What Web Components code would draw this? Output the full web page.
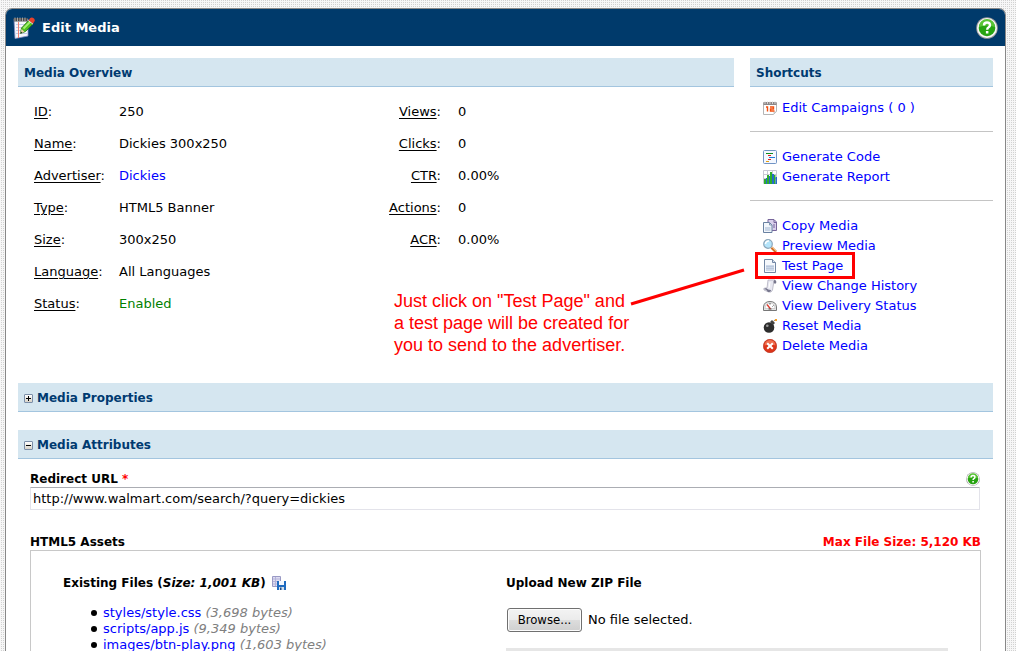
<!DOCTYPE html>
<html lang="en">
<head>
<meta charset="utf-8">
<title>Edit Media</title>
<style>
  html { background: #f7f7f7 conic-gradient(from 270deg at 1px 1px, #d2d2d2 25%, transparent 0) 1px 0 / 2px 2px; }
  body { margin: 8px 10px 0 5px; font: 13px/16px "DejaVu Sans", Verdana, sans-serif; color: #000; }
</style>
</head>
<body>
<media-panel heading="Edit Media">
  <media-columns>
    <panel-section heading="Media Overview">
      <media-overview></media-overview>
    </panel-section>
    <panel-section heading="Shortcuts">
      <shortcut-group>
        <shortcut-link icon="calendar">Edit Campaigns ( 0 )</shortcut-link>
      </shortcut-group>
      <shortcut-group>
        <shortcut-link icon="code">Generate Code</shortcut-link>
        <shortcut-link icon="chart">Generate Report</shortcut-link>
      </shortcut-group>
      <shortcut-group>
        <shortcut-link icon="copy">Copy Media</shortcut-link>
        <shortcut-link icon="search">Preview Media</shortcut-link>
        <shortcut-link icon="page">Test Page<call-out slot="note">Just click on "Test Page" and<br>a test page will be created for<br>you to send to the advertiser.</call-out></shortcut-link>
        <shortcut-link icon="scroll">View Change History</shortcut-link>
        <shortcut-link icon="gauge">View Delivery Status</shortcut-link>
        <shortcut-link icon="bomb">Reset Media</shortcut-link>
        <shortcut-link icon="delete">Delete Media</shortcut-link>
      </shortcut-group>
    </panel-section>
  </media-columns>
  <panel-section heading="Media Properties" toggle="closed"></panel-section>
  <panel-section heading="Media Attributes" toggle="open">
    <media-attributes></media-attributes>
  </panel-section>
</media-panel>

<script>
const ICONS = {
  notepad: `<svg viewBox="0 0 22 22"><path d="M1 2 15 2 15 19 2 21.500z" fill="#f6f7fc" stroke="#8790c4" stroke-width=".8"/><path d="M3 7.500h11M3 10.500h11M3 13.500h11M3 16.500h11" stroke="#c3cdea"/><path d="M5.500 5v16" stroke="#f08070"/><path d="M.5 1h14v3.500H1z" fill="#4a4a4a"/><path d="M2 .5v4M4.500.5v4M7 .5v4M9.500.5v4M12 .5v4" stroke="#ccc" stroke-width=".7"/><path d="M7.500 16.500 8.500 11 15.500 3.500 20 7 12.500 14.500z" fill="#4fc020" stroke="#28720f" stroke-width=".8"/><path d="m10.500 11.500 7-7" stroke="#a6f06f" stroke-width="1.800"/><path d="m7.500 16.500 1-4.500 3 2.800z" fill="#efd3a4"/><path d="m7.500 16.500.5-2 1.400 1.300z" fill="#222"/><path d="M15.500 3.500 17 1.200Q19-.3 21 1.500q1.600 2 0 3.500L20 7z" fill="#e8412a"/><path d="m15.300 3.500 4.700 3.700" stroke="#e4e4e4"/></svg>`,
  help: `<svg viewBox="0 0 22 22"><circle cx="11" cy="11" r="10.800" fill="#999"/><circle cx="11" cy="11" r="10" fill="#f6f6f6"/><circle cx="11" cy="11" r="8.300" fill="#27a312"/><path d="M3 10a8 8 0 0 1 16 0q-8-3-16 0" fill="#59c436"/><path d="M8 8.500q0-3 3-3t3 2.600q0 1.500-1.600 2.400-1.200.7-1.200 2.200" fill="none" stroke="#fff" stroke-width="2.400"/><path d="M9.900 14h2.500v2.500H9.900z" fill="#fff"/></svg>`,
  calendar: `<svg viewBox="0 0 14 14"><path d="M.5 2h13v8.500l-3 3H.5z" fill="#fff" stroke="#b5b5b5"/><path d="M10.500 13.500v-3h3z" fill="#ccc"/><path d="M.5 1h13v3H.5z" fill="#8d8787"/><path d="M2 0v3M4.500 0v3M7 0v3M9.500 0v3M12 0v3" stroke="#e5e5e5" stroke-width=".8"/><path d="M3 6h1.500v4.500M7 6h3.500v2H7.500v2H11.500" stroke="#f4500f" stroke-width="1.400" fill="none"/></svg>`,
  code: `<svg viewBox="0 0 14 14"><rect x=".5" y=".5" width="13" height="13" rx="1" fill="#f4f8ff" stroke="#7194c5"/><path d="M3 3.500h7" stroke="#108a20" stroke-width="1.200"/><path d="M5 5.500h3" stroke="#d22"/><path d="M6 7.500h6" stroke="#227cda" stroke-width="1.200"/><path d="M5 9.500h3" stroke="#d22"/><path d="M3 11.500h3" stroke="#e8a010" stroke-width="1.200"/></svg>`,
  chart: `<svg viewBox="0 0 14 14"><path d="M.5.500h13v13H.5zM.5 4.500h13M.5 8.500h13M4.500.5v13M9.500.5v13" fill="#fff" stroke="#c9c9d4"/><path d="M1 9h2v5H1zM4 5h2v9H4zM7 2h2v12H7zM11 5h1.500v9H11z" fill="#2fae2a"/><path d="M3 8h1v6H3zM6 6h1v8H6zM9 4h2v10H9zM12.500 7H14v7h-1.500z" fill="#276aca"/></svg>`,
  copy: `<svg viewBox="0 0 14 14"><path d="M5 .5h6l2.500 2.500v8.500H5z" fill="#d9d0ec" stroke="#77659b"/><path d="M11 1v2.500h2M10 6h2M10 8h2" fill="none" stroke="#77659b"/><path d="M.5 3.500h6L9 6v7.500H.5z" fill="#f2f6fb" stroke="#6981a1"/><path d="M2 8h5.500v4H2z" fill="#c8d5e6"/><path d="M6.500 3.500V6H9" fill="none" stroke="#8398b3"/></svg>`,
  search: `<svg viewBox="0 0 14 14"><path d="m8.500 8.500 4.500 4.500" stroke="#cf7330" stroke-width="2.700"/><path d="m9 8 4 4" stroke="#f7bd79"/><circle cx="5" cy="5" r="4.300" fill="#b4e4fa" stroke="#8ba6ba" stroke-width="1.200"/><path d="M2.500 5A3 3 0 0 1 6 2" stroke="#fff" stroke-width="1.500" fill="none"/></svg>`,
  page: `<svg viewBox="0 0 14 14"><path d="M1.500.500h8L12.500 3.500v10h-11z" fill="#f5f8fc" stroke="#7287a5"/><path d="M9.500.5v3h3" fill="#d5e0ed" stroke="#7287a5"/><path d="M3 6h8v6H3z" fill="#ccd8e9"/><path d="M3 7.500h8M3 9.500h8" stroke="#b9c7dc"/></svg>`,
  scroll: `<svg viewBox="0 0 14 14"><path d="M5 1h7q-2 1-1.500 4L9.500 11q-1 3-4 2L1 11q-1-2 1-2h2z" fill="#e8e8f1" stroke="#a9a8b8" stroke-width=".7"/><path d="M11 4.500q-1-3.500 1-3.500 2 1 1 3.500zM1 10q2 0 4 3 3 0 3-2-3 0-5-2z" fill="#77778d"/><path d="M7 3 6 9" stroke="#fff"/></svg>`,
  gauge: `<svg viewBox="0 0 14 14"><path d="M.5 11.500V8Q1 2.500 7 2.500T13.500 8v3.500z" fill="#e6e6e6" stroke="#777"/><path d="M2 9.500Q2.500 4 7 4T12 9.500z" fill="#fff" stroke="#bbb" stroke-width=".6"/><path d="M4 5.500 7.500 10" stroke="#db3b2d" stroke-width="1.300"/><path d="M5.500 10h3M10.500 6.500l-1 1M7 4v1.500" stroke="#555"/></svg>`,
  bomb: `<svg viewBox="0 0 14 14"><circle cx="6" cy="8.500" r="5.300" fill="#2d2d2d"/><path d="m7 3 2-2 3 3-2 2z" fill="#414141"/><path d="M10.500 2.500q1-2 2.500-1" fill="none" stroke="#8b6c42"/><path d="M12 0h2v2h-2z" fill="#f5a12a"/><circle cx="4.300" cy="6.800" r="1.300" fill="#999"/></svg>`,
  delete: `<svg viewBox="0 0 14 14"><circle cx="7" cy="7" r="6.700" fill="#dc3519" stroke="#b42816" stroke-width=".6"/><path d="M1.500 6.500a5.500 5.500 0 0 1 11 0q-5-2-11 0" fill="#ef7050"/><path d="m4.200 4.200 5.600 5.600m0-5.600L4.200 9.800" stroke="#fff" stroke-width="2"/></svg>`,
  save: `<svg viewBox="0 0 14 14"><path d="M.5.500h8v10h-8z" fill="#dddcf1" stroke="#9a9ac5"/><path d="M1 3h7M1 5.500h7M1 8h7M3.500 1v9" stroke="#b4b3da"/><path d="M5 5h9v9H5z" fill="#1f6bc0"/><path d="M7 5h5v4H7z" fill="#f5f9ff"/><path d="M7 11h5v3H7z" fill="#d2dfec"/><path d="M8 11.500h1.500V14H8z" fill="#204b80"/></svg>`
};

function define(name, html, setup) {
  const template = document.createElement("template");
  template.innerHTML = html;
  customElements.define(name, class extends HTMLElement {
    constructor() {
      super();
      this.attachShadow({ mode: "open" }).append(template.content.cloneNode(true));
    }
    connectedCallback() { if (setup) setup(this, this.shadowRoot); }
  });
}

define("ui-icon", `
  <style>
    :host { display: block; width: 14px; height: 14px; flex: none; }
    svg { display: block; width: 100%; height: 100%; }
    div { height: 100%; }
  </style><div aria-hidden="true"></div>`,
  (host, root) => { root.querySelector("div").innerHTML = ICONS[host.getAttribute("name")]; });

define("media-panel", `
  <style>
    :host { display: block; background: #fff; border: 1px solid #888; border-bottom: 0; border-radius: 7px 7px 0 0; overflow: hidden; }
    header { display: flex; align-items: center; gap: 7px; height: 37px; padding: 0 7px 0 7px; background: #003a6b; color: #fff; }
    h1 { flex: 1; margin: 0; font-size: 13px; line-height: 18px; }
    ui-icon { width: 22px; height: 22px; }
    button { display: block; padding: 0; border: 0; background: none; }
    main { display: grid; grid-template-columns: minmax(0, 1fr); row-gap: 18px; padding: 12px 12px 0; }
  </style>
  <header><ui-icon name="notepad"></ui-icon><h1></h1><button aria-label="Help"><ui-icon name="help"></ui-icon></button></header>
  <main><slot></slot></main>`,
  (host, root) => { root.querySelector("h1").textContent = host.getAttribute("heading"); });

define("media-columns", `
  <style>
    :host { display: grid; grid-template-columns: minmax(0, 1fr) 243px; gap: 16px; }
  </style><slot></slot>`);

define("panel-section", `
  <style>
    :host { display: block; }
    h2 { display: flex; align-items: center; gap: 4px; margin: 0; padding: 7px 6px 5px; background: #d5e6f0; border-bottom: 1px solid #a3c5df; color: #003a70; font-size: 12px; line-height: 16px; }
    button { width: 9px; height: 9px; padding: 0; border: 1px solid #7b8ea8; border-radius: 1px; background: linear-gradient(#fff, #d8d3c8); }
    button svg { display: block; }
  </style>
  <h2></h2><slot></slot>`,
  (host, root) => {
    const h2 = root.querySelector("h2");
    const toggle = host.getAttribute("toggle");
    if (toggle) {
      const open = toggle === "open";
      h2.innerHTML = `<button aria-label="Toggle section" aria-expanded="${open}"><svg width="7" height="7" viewBox="0 0 7 7"><path d="M1 3h5v1H1z${open ? "" : "M3 1h1v5H3z"}"/></svg></button>`;
    }
    h2.append(host.getAttribute("heading"));
  });

define("media-overview", `
  <style>
    :host { display: flex; align-items: flex-start; padding: 9px 16px 0; }
    table { border-collapse: collapse; }
    th, td { height: 32px; padding: 0; font-weight: normal; text-align: left; }
    table:first-of-type { width: 335px; }
    table:first-of-type th { width: 85px; }
    table:last-of-type th { width: 72px; text-align: right; }
    table:last-of-type td { padding-left: 17px; }
    u { text-underline-offset: 2px; }
    a { color: #00f; text-decoration: none; }
    .on { color: #008000; }
  </style>
  <table>
    <tr><th scope="row"><u>ID</u>:</th><td>250</td></tr>
    <tr><th scope="row"><u>Name</u>:</th><td>Dickies 300x250</td></tr>
    <tr><th scope="row"><u>Advertiser</u>:</th><td><a href="#">Dickies</a></td></tr>
    <tr><th scope="row"><u>Type</u>:</th><td>HTML5 Banner</td></tr>
    <tr><th scope="row"><u>Size</u>:</th><td>300x250</td></tr>
    <tr><th scope="row"><u>Language</u>:</th><td>All Languages</td></tr>
    <tr><th scope="row"><u>Status</u>:</th><td class="on">Enabled</td></tr>
  </table>
  <table>
    <tr><th scope="row"><u>Views</u>:</th><td>0</td></tr>
    <tr><th scope="row"><u>Clicks</u>:</th><td>0</td></tr>
    <tr><th scope="row"><u>CTR</u>:</th><td>0.00%</td></tr>
    <tr><th scope="row"><u>Actions</u>:</th><td>0</td></tr>
    <tr><th scope="row"><u>ACR</u>:</th><td>0.00%</td></tr>
  </table>`);

define("shortcut-group", `
  <style>
    :host { display: block; padding: 15px 0 13px; border-bottom: 1px solid #c4c4c4; }
    :host(:first-of-type) { padding-top: 11px; }
    :host(:last-of-type) { border-bottom: 0; padding-bottom: 9px; }
  </style><slot></slot>`);

define("shortcut-link", `
  <style>
    :host { display: block; position: relative; padding-left: 13px; }
    a { display: flex; align-items: center; gap: 5px; height: 20px; color: #00f; text-decoration: none; }
  </style>
  <a href="#"><div></div><span><slot></slot></span></a><slot name="note"></slot>`,
  (host, root) => { root.querySelector("div").innerHTML = `<ui-icon name="${host.getAttribute("icon")}"></ui-icon>`; });

/* Red frame round a shortcut, with a line to a note on its left. */
define("call-out", `
  <style>
    :host { color: #f00; font: 18px/22px "Liberation Sans", Arial, sans-serif; }
    .frame, svg, p { position: absolute; z-index: 1; pointer-events: none; }
    .frame { box-sizing: border-box; left: 5px; top: -4px; width: 100px; height: 27px; border: 3px solid #f00; }
    svg { left: -120px; top: 11px; }
    p { left: -356px; top: 34px; margin: 0; white-space: nowrap; }
  </style>
  <div class="frame"></div>
  <svg width="120" height="40" viewBox="0 0 120 40"><path d="M1 37 114 3" stroke="#f00" stroke-width="3"/></svg>
  <p><slot></slot></p>`);

define("media-attributes", `
  <style>
    :host { display: block; padding: 12px 12px 0; }
    .label { display: flex; justify-content: space-between; align-items: center; height: 16px; font-size: 12px; font-weight: bold; }
    .label b { color: #f00; }
    .help { display: block; padding: 0; border: 0; background: none; }
    .url { display: block; box-sizing: border-box; width: 100%; height: 23px; padding: 0 2px; border: 1px solid #e3e3ea; border-top-color: #abadb3; font: inherit; color: #000; background: #fff; }
    .inset { margin-right: 1px; }
    .second { margin-top: 24px; }
    .assets { display: grid; grid-template-columns: 443px minmax(0, 1fr); padding: 24px 32px 0; border: 1px solid #c8c8c8; border-bottom: 0; }
    h3 { display: flex; align-items: center; gap: 6px; height: 16px; margin: 0; font-size: 12px; line-height: 16px; }
    ul { margin: 14px 0 0; padding: 0 0 0 28px; list-style: none; }
    li { height: 16px; white-space: nowrap; }
    li::before { content: ""; display: inline-block; width: 6px; height: 6px; margin: 0 6px 1px 0; border-radius: 3px; background: #000; }
    a { color: #00f; text-decoration: none; }
    i { color: #808080; }
    h3 i { color: #000; }
    .file { display: flex; align-items: center; gap: 6px; margin-top: 17px; padding: 0 0 16px 1px; }
    .browse { width: 75px; height: 24px; padding: 0; border: 1px solid #707070; border-radius: 3px; background: linear-gradient(#f3f3f3, #ebebeb 50%, #dddddd 50%, #cfcfcf); box-shadow: inset 0 0 0 1px #fcfcfc; font: 13px/16px "DejaVu Sans Condensed", Tahoma, sans-serif; color: #000; }
    .bar { height: 3px; background: #e6e6e6; }
  </style>
  <div class="inset">
    <div class="label"><label for="url">Redirect URL <b>*</b></label><button class="help" aria-label="Help"><ui-icon name="help"></ui-icon></button></div>
    <input class="url" id="url" type="text" value="http://www.walmart.com/search/?query=dickies">
  </div>
  <div class="label second"><span>HTML5 Assets</span><b>Max File Size: 5,120 KB</b></div>
  <div class="assets">
    <section>
      <h3><span>Existing Files (<i>Size: 1,001 KB</i>)</span><ui-icon name="save"></ui-icon></h3>
      <ul>
        <li><a href="#">styles/style.css</a> <i>(3,698 bytes)</i></li>
        <li><a href="#">scripts/app.js</a> <i>(9,349 bytes)</i></li>
        <li><a href="#">images/btn-play.png</a> <i>(1,603 bytes)</i></li>
      </ul>
    </section>
    <section>
      <h3>Upload New ZIP File</h3>
      <div class="file"><button class="browse">Browse...</button><span>No file selected.</span><input type="file" aria-label="Upload New ZIP File" hidden></div>
      <div class="bar"></div>
    </section>
  </div>`,
  (host, root) => {
    const file = root.querySelector("input[type=file]");
    root.querySelector(".browse").onclick = () => file.click();
  });
</script>
</body>
</html>
